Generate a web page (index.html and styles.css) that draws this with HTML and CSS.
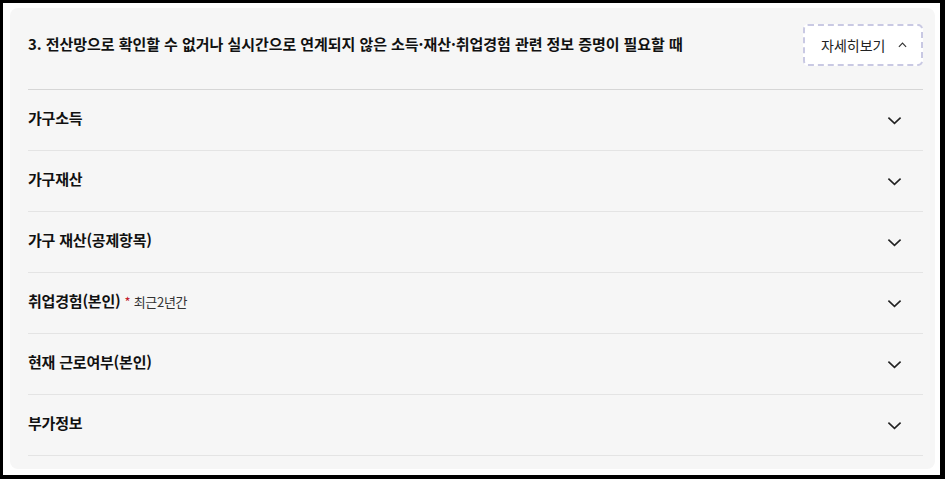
FILE: index.html
```html
<!DOCTYPE html>
<html lang="ko">
<head>
  <meta charset="UTF-8">
  <meta name="viewport" content="width=device-width, initial-scale=1">
  <title>증명 서류 안내</title>
  <link rel="stylesheet" href="styles.css">
</head>
<body>
  <div class="frame">
    <section class="panel">
      <!-- 헤더 -->
      <div class="panel-head">
        <h2 class="panel-title">3. 전산망으로 확인할 수 없거나 실시간으로 연계되지 않은 소득·재산·취업경험 관련 정보 증명이 필요할 때</h2>
        <button class="more-btn">자세히보기
          <svg class="chev-up" viewBox="0 0 10 6"><path d="M1 5 L5 1 L9 5"/></svg>
        </button>
      </div>

      <!-- 항목 목록 -->
      <ul class="acc-list">
        <li class="acc-item"><span class="acc-label">가구소득</span>
          <svg class="chev" viewBox="0 0 16 9"><path d="M1.5 1.5 L8 7.5 L14.5 1.5"/></svg></li>
        <li class="acc-item"><span class="acc-label">가구재산</span>
          <svg class="chev" viewBox="0 0 16 9"><path d="M1.5 1.5 L8 7.5 L14.5 1.5"/></svg></li>
        <li class="acc-item"><span class="acc-label">가구 재산(공제항목)</span>
          <svg class="chev" viewBox="0 0 16 9"><path d="M1.5 1.5 L8 7.5 L14.5 1.5"/></svg></li>
        <li class="acc-item"><span class="acc-label">취업경험(본인)<span class="note"><em>*</em> 최근2년간</span></span>
          <svg class="chev" viewBox="0 0 16 9"><path d="M1.5 1.5 L8 7.5 L14.5 1.5"/></svg></li>
        <li class="acc-item"><span class="acc-label">현재 근로여부(본인)</span>
          <svg class="chev" viewBox="0 0 16 9"><path d="M1.5 1.5 L8 7.5 L14.5 1.5"/></svg></li>
        <li class="acc-item"><span class="acc-label">부가정보</span>
          <svg class="chev" viewBox="0 0 16 9"><path d="M1.5 1.5 L8 7.5 L14.5 1.5"/></svg></li>
      </ul>
    </section>
  </div>
</body>
</html>
```

FILE: styles.css
```css
/* 기본 */
html, body {
  margin: 0;
  height: 100%;
}

body {
  background: #000;
  padding: 3px 5px 4px 3px;
  box-sizing: border-box;
  font-family: "Noto Sans CJK KR", "Noto Sans", sans-serif;
  color: #111;
}

.frame {
  background: #fff;
  height: 100%;
  padding: 5px 5px 6px 7px;
  box-sizing: border-box;
}

/* 패널 */
.panel {
  background: #f6f6f6;
  border-radius: 8px;
  height: 100%;
  box-sizing: border-box;
  padding: 0 12px 0 18px;
}

.panel-head {
  display: flex;
  align-items: center;
  justify-content: space-between;
  padding: 16px 0 23px;
  border-bottom: 1px solid #d6d6d6;
}

.panel-title {
  margin: 0;
  padding-bottom: 3px;
  font-size: 15px;
  font-weight: 700;
  letter-spacing: -0.05px;
}

.more-btn {
  display: flex;
  align-items: center;
  gap: 13px;
  width: 120px;
  height: 42px;
  box-sizing: border-box;
  padding: 0 0 0 16px;
  background: #fff;
  border: 2px dashed #c9c9e3;
  border-radius: 5px;
  font-family: inherit;
  font-size: 14px;
  color: #222;
}

.chev-up {
  width: 9px;
  height: 6px;
  fill: none;
  stroke: #333;
  stroke-width: 1.3;
}

/* 아코디언 */
.acc-list {
  list-style: none;
  margin: 0;
  padding: 0;
}

.acc-item {
  display: flex;
  align-items: center;
  justify-content: space-between;
  height: 60px;
  padding-right: 21px;
  border-bottom: 1px solid #e4e4e4;
}

.acc-label {
  font-size: 15px;
  font-weight: 700;
  padding-bottom: 5px;
  letter-spacing: -0.2px;
}

.note {
  font-size: 13px;
  font-weight: 400;
  color: #333;
  margin-left: 4px;
  letter-spacing: -0.3px;
}

.note em {
  font-style: normal;
  color: #c3202b;
}

.chev {
  width: 15px;
  height: 9px;
  fill: none;
  stroke: #222;
  stroke-width: 1.7;
}
```
